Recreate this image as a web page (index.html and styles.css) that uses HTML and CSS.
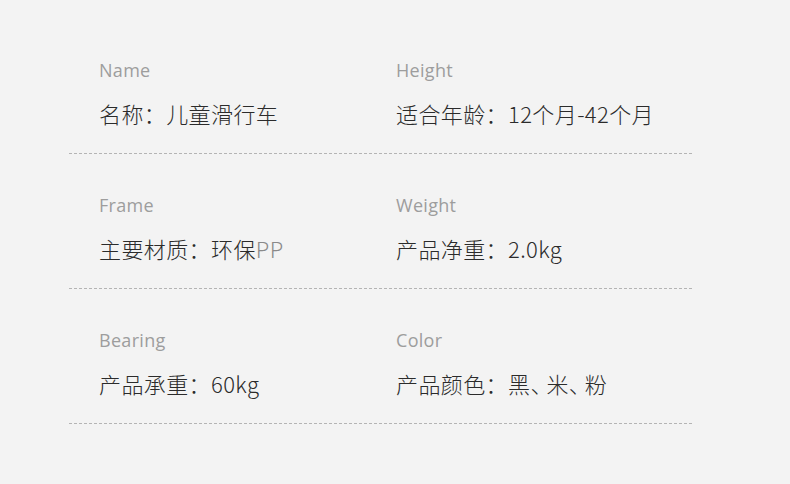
FILE: index.html
```html
<!DOCTYPE html>
<html lang="zh">
<head>
<meta charset="utf-8">
<link rel="stylesheet" href="styles.css">
</head>
<body>
<div class="sheet">
  <div class="row">
    <div class="cell">
      <div class="label">Name</div>
      <div class="value">名称：儿童滑行车</div>
    </div>
    <div class="cell">
      <div class="label">Height</div>
      <div class="value">适合年龄：12个月-42个月</div>
    </div>
  </div>
  <div class="rule"></div>
  <div class="row">
    <div class="cell">
      <div class="label">Frame</div>
      <div class="value">主要材质：环保<span class="light">PP</span></div>
    </div>
    <div class="cell">
      <div class="label">Weight</div>
      <div class="value">产品净重：2.0kg</div>
    </div>
  </div>
  <div class="rule"></div>
  <div class="row">
    <div class="cell">
      <div class="label">Bearing</div>
      <div class="value">产品承重：60kg</div>
    </div>
    <div class="cell">
      <div class="label">Color</div>
      <div class="value">产品颜色：黑<span class="dun">、</span>米<span class="dun">、</span>粉</div>
    </div>
  </div>
  <div class="rule"></div>
</div>
</body>
</html>
```

FILE: styles.css
```css
html, body {
  margin: 0;
  padding: 0;
}
body {
  background: #f3f3f3;
  width: 790px;
  height: 484px;
  overflow: hidden;
  font-family: "Noto Sans CJK SC", "Noto Sans", sans-serif;
}
.sheet {
  margin-left: 69px;
  width: 623px;
  padding-top: 58px;
}
.row {
  display: grid;
  grid-template-columns: 297px 1fr;
  padding-left: 30px;
  padding-bottom: 24px;
}
.rule + .row {
  padding-top: 39px;
}
.label {
  font-family: "Open Sans", "Noto Sans", sans-serif;
  font-size: 18px;
  line-height: 24px;
  letter-spacing: 0.3px;
  color: #9d9d9d;
}
.value {
  margin-top: 15px;
  font-size: 22px;
  font-weight: 300;
  line-height: 32px;
  letter-spacing: 0.4px;
  color: #2b2b2b;
}
.light {
  color: #8a8a8a;
}
.dun {
  font-feature-settings: "halt";
  letter-spacing: 5px;
}
.rule {
  height: 1px;
  background-image: repeating-linear-gradient(to right, #b4b4b4 0 3px, transparent 3px 5px);
}
```
